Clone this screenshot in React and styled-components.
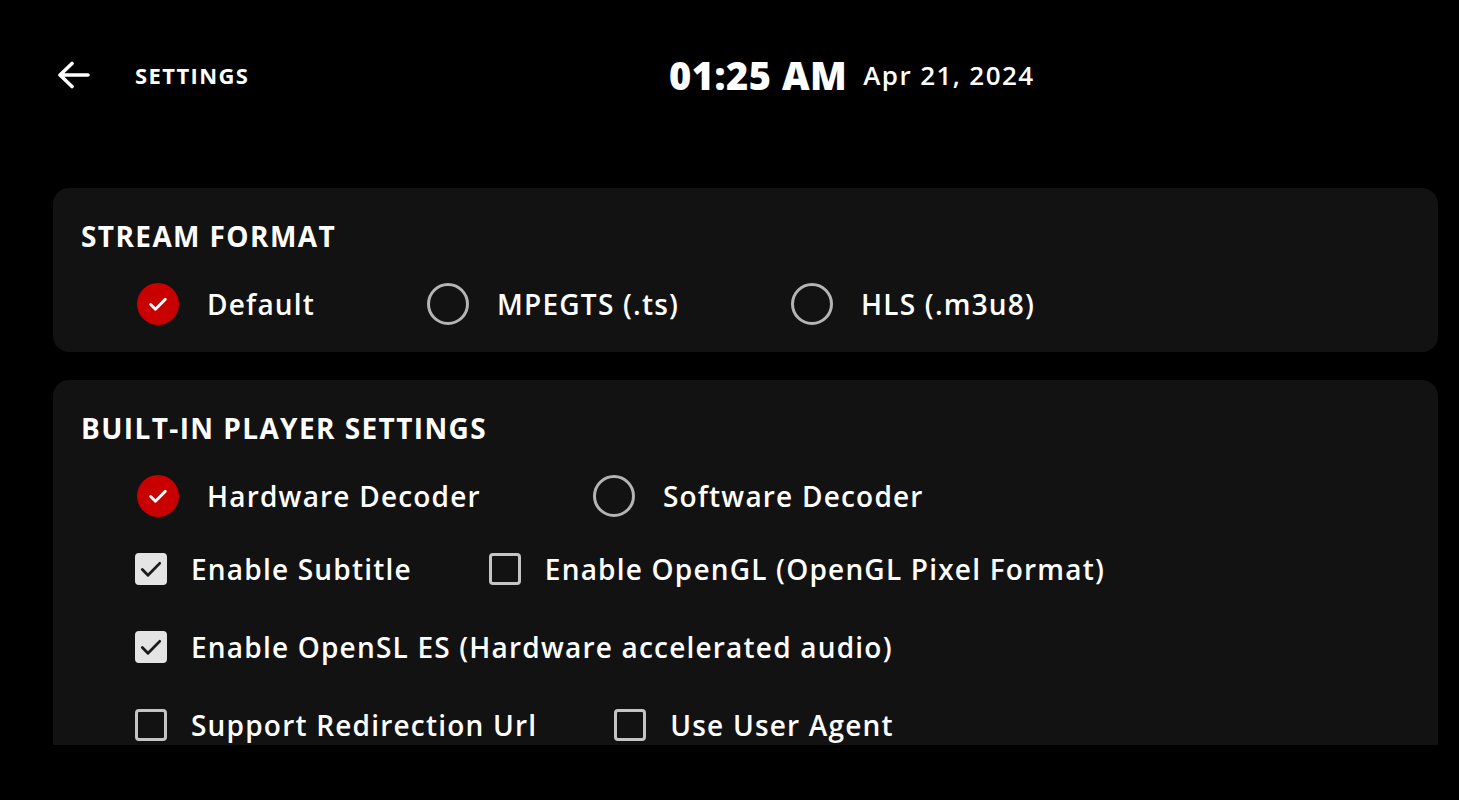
import React from 'react';
import styled, { createGlobalStyle } from 'styled-components';

const GlobalStyle = createGlobalStyle`
  html, body {
    margin: 0;
    padding: 0;
    background: #000000;
    height: 100%;
  }
  body {
    font-family: 'Open Sans', 'Liberation Sans', sans-serif;
    color: #ffffff;
    overflow: hidden;
  }
`;

const CheckMark = ({ color, width = 18, stroke = 3 }) => (
  <svg width={width} height={width} viewBox="0 0 24 24" fill="none">
    <path
      d="M4 12.5l5.2 5.2L20 6.8"
      stroke={color}
      strokeWidth={stroke}
      strokeLinecap="round"
      strokeLinejoin="round"
    />
  </svg>
);

const BackArrow = () => (
  <svg width="34" height="28" viewBox="0 0 34 28" fill="none">
    <path
      d="M31 14H3M15 2.5L3 14l12 11.5"
      stroke="#ffffff"
      strokeWidth="3.6"
      strokeLinecap="round"
      strokeLinejoin="round"
    />
  </svg>
);

const Radio = ({ checked, label }) => (
  <RadioItem>
    <RadioCircle $checked={checked}>
      {checked && <CheckMark color="#ffffff" width={22} stroke={3.2} />}
    </RadioCircle>
    <Label>{label}</Label>
  </RadioItem>
);

const Checkbox = ({ checked, label }) => (
  <CheckItem>
    <Box $checked={checked}>
      {checked && <CheckMark color="#1a1a1a" width={26} stroke={2.6} />}
    </Box>
    <Label>{label}</Label>
  </CheckItem>
);

const App = () => (
  <Page>
    <GlobalStyle />
    <Header>
      <Left>
        <BackButton>
          <BackArrow />
        </BackButton>
        <PageTitle>SETTINGS</PageTitle>
      </Left>
      <Clock>
        <Time>01:25 AM</Time>
        <DateText>Apr 21, 2024</DateText>
      </Clock>
    </Header>

    <Content>
      <Card>
        <CardTitle>STREAM FORMAT</CardTitle>
        <RadioRow>
          <Radio checked label="Default" />
          <Radio label="MPEGTS (.ts)" />
          <Radio label="HLS (.m3u8)" />
        </RadioRow>
      </Card>

      <Card>
        <CardTitle>BUILT-IN PLAYER SETTINGS</CardTitle>
        <RadioRow>
          <Radio checked label="Hardware Decoder" />
          <Radio label="Software Decoder" />
        </RadioRow>
        <CheckList>
          <CheckRow>
            <Checkbox checked label="Enable Subtitle" />
            <Checkbox label="Enable OpenGL (OpenGL Pixel Format)" />
          </CheckRow>
          <CheckRow>
            <Checkbox checked label="Enable OpenSL ES (Hardware accelerated audio)" />
          </CheckRow>
          <CheckRow>
            <Checkbox label="Support Redirection Url" />
            <Checkbox label="Use User Agent" />
          </CheckRow>
        </CheckList>
      </Card>
    </Content>
  </Page>
);

const Page = styled.div`
  width: 100vw;
  height: 100vh;
  display: flex;
  flex-direction: column;
  background: #000000;
`;

const Header = styled.header`
  height: 150px;
  flex: 0 0 150px;
  display: flex;
  align-items: center;
  padding-left: 57px;
  box-sizing: border-box;
`;

const Left = styled.div`
  width: 612px;
  display: flex;
  align-items: center;
  gap: 44px;
`;

const BackButton = styled.div`
  display: flex;
  align-items: center;
  width: 34px;
  height: 28px;
`;

const PageTitle = styled.div`
  font-size: 22px;
  font-weight: 700;
  letter-spacing: 1.4px;
`;

const Clock = styled.div`
  display: flex;
  align-items: center;
  gap: 16px;
`;

const Time = styled.div`
  font-size: 38px;
  font-weight: 800;
  letter-spacing: 0.5px;
`;

const DateText = styled.div`
  font-size: 26px;
  font-weight: 600;
  letter-spacing: 1.4px;
`;

const Content = styled.main`
  height: 595px;
  flex: 0 0 595px;
  overflow: hidden;
  padding: 38px 21px 0 53px;
  box-sizing: border-box;
  display: flex;
  flex-direction: column;
  gap: 28px;
`;

const Card = styled.section`
  flex: 0 0 auto;
  background: #121212;
  border-radius: 16px;
  padding: 28px 28px 27px;
`;

const CardTitle = styled.h2`
  margin: 0;
  height: 40px;
  line-height: 40px;
  font-size: 28px;
  font-weight: 700;
  letter-spacing: 1.4px;
`;

const RadioRow = styled.div`
  margin-top: 27px;
  padding-left: 56px;
  display: flex;
  align-items: center;
  gap: 112px;
`;

const RadioItem = styled.div`
  display: flex;
  align-items: center;
  gap: 28px;
`;

const RadioCircle = styled.div`
  width: 42px;
  height: 42px;
  box-sizing: border-box;
  border-radius: 50%;
  display: flex;
  align-items: center;
  justify-content: center;
  background: ${(p) => (p.$checked ? '#c80000' : 'transparent')};
  border: ${(p) => (p.$checked ? 'none' : '3px solid #b4b4b4')};
`;

const Label = styled.span`
  font-size: 28px;
  font-weight: 600;
  letter-spacing: 1.2px;
  white-space: nowrap;
`;

const CheckList = styled.div`
  margin-top: 32px;
  padding-left: 54px;
  display: flex;
  flex-direction: column;
  gap: 38px;
`;

const CheckRow = styled.div`
  height: 40px;
  display: flex;
  align-items: center;
  gap: 77px;
`;

const CheckItem = styled.div`
  display: flex;
  align-items: center;
  gap: 24px;
`;

const Box = styled.div`
  width: 32px;
  height: 32px;
  box-sizing: border-box;
  border-radius: 4px;
  display: flex;
  align-items: center;
  justify-content: center;
  background: ${(p) => (p.$checked ? '#e4e4e4' : 'transparent')};
  border: 3px solid ${(p) => (p.$checked ? '#e4e4e4' : '#c4c4c4')};
`;

export default App;
